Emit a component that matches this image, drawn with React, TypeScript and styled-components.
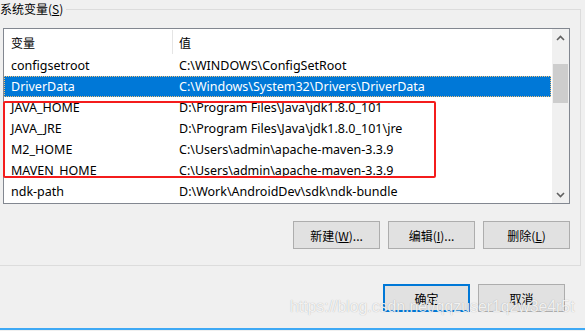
import styled, { createGlobalStyle } from "styled-components";

const GlobalStyle = createGlobalStyle`
  html, body {
    margin: 0;
    padding: 0;
    background: #f0f0f0;
  }
  body {
    font-family: "Noto Sans", "Noto Sans CJK SC", sans-serif;
    font-size: 12.5px;
    color: #000;
  }
`;

type EnvVar = { name: string; value: string };

const vars: EnvVar[] = [
  { name: "configsetroot", value: "C:\\WINDOWS\\ConfigSetRoot" },
  { name: "DriverData", value: "C:\\Windows\\System32\\Drivers\\DriverData" },
  { name: "JAVA_HOME", value: "D:\\Program Files\\Java\\jdk1.8.0_101" },
  { name: "JAVA_JRE", value: "D:\\Program Files\\Java\\jdk1.8.0_101\\jre" },
  { name: "M2_HOME", value: "C:\\Users\\admin\\apache-maven-3.3.9" },
  { name: "MAVEN_HOME", value: "C:\\Users\\admin\\apache-maven-3.3.9" },
  { name: "ndk-path", value: "D:\\Work\\AndroidDev\\sdk\\ndk-bundle" },
];

const Window = styled.div`
  position: relative;
  width: 585px;
  height: 331px;
  overflow: hidden;
  display: flex;
  flex-direction: column;
`;

const Group = styled.fieldset`
  box-sizing: border-box;
  width: 582px;
  min-width: 0;
  margin: 0 0 0 -1px;
  padding: 0;
  border: 1px solid #dcdcdc;
`;

const Legend = styled.legend`
  padding: 0 3px 0 0;
  line-height: 18px;
  font-family: "Noto Sans CJK SC", sans-serif;
  font-size: 12px;
`;

const Key = styled.span`
  text-decoration: underline;
  text-underline-offset: 1px;
`;

const GroupBody = styled.div`
  padding: 10px 10px 16px 3px;
`;

const ListBox = styled.div`
  position: relative;
  box-sizing: border-box;
  width: 567px;
  height: 176px;
  border: 1px solid #828790;
  background: #fff;
  display: flex;
`;

const ListArea = styled.div`
  flex: 1;
  display: flex;
  flex-direction: column;
  overflow: hidden;
`;

const HeaderRow = styled.div`
  display: grid;
  grid-template-columns: 168px 1fr;
  height: 26px;
  font-family: "Noto Sans CJK SC", sans-serif;
  font-size: 12px;
`;

const HeaderCell = styled.div<{ $divider?: boolean }>`
  display: flex;
  align-items: center;
  padding-left: ${(p) => (p.$divider ? "6px" : "7px")};
  margin: 1px 0 1px;
  border-left: ${(p) => (p.$divider ? "1px solid #e5e5e5" : "none")};
`;

const Row = styled.div<{ $selected?: boolean }>`
  box-sizing: border-box;
  display: grid;
  grid-template-columns: 168px 1fr;
  height: 21px;
  align-items: center;
  white-space: nowrap;
  background: ${(p) => (p.$selected ? "#0078d7" : "transparent")};
  color: ${(p) => (p.$selected ? "#fff" : "#000")};
  outline: ${(p) => (p.$selected ? "1px dotted #f3c27a" : "none")};
  outline-offset: -1px;
  margin-right: 1px;
`;

const Cell = styled.div`
  padding-left: 7px;
  overflow: hidden;
`;

const ScrollBar = styled.div`
  width: 17px;
  background: #f0f0f0;
  display: flex;
  flex-direction: column;
`;

const ArrowBtn = styled.div`
  height: 17px;
  display: flex;
  align-items: center;
  justify-content: center;
`;

const Track = styled.div`
  flex: 1;
  display: flex;
  flex-direction: column;
`;

const Thumb = styled.div`
  margin: 18px 1px 0;
  height: 39px;
  background: #cdcdcd;
`;

const Annotation = styled.div`
  position: absolute;
  left: -1px;
  top: 72px;
  width: 433px;
  height: 77px;
  box-sizing: border-box;
  border: 2px solid #f41c1c;
  border-radius: 2px;
  pointer-events: none;
`;

const ButtonRow = styled.div<{ $inset?: number }>`
  display: flex;
  justify-content: flex-end;
  gap: 8px;
  padding-right: ${(p) => p.$inset ?? 0}px;
`;

const GroupButtons = styled(ButtonRow)`
  margin-top: 17px;
  width: 567px;
`;

const DialogButtons = styled(ButtonRow)`
  margin-top: 18px;
`;

const Button = styled.button<{ $primary?: boolean }>`
  box-sizing: border-box;
  width: 87px;
  height: 28px;
  padding: 0;
  background: #e1e1e1;
  border: ${(p) => (p.$primary ? "2px solid #0078d7" : "1px solid #adadad")};
  font-family: "Noto Sans CJK SC", sans-serif;
  font-size: 12px;
  color: #000;
`;

const FooterLine = styled.div`
  margin-top: 16px;
  height: 2px;
  background: #3ea9f5;
`;

const Watermark = styled.div`
  position: absolute;
  left: 290px;
  top: 298px;
  font-family: "Liberation Sans", sans-serif;
  font-size: 15.8px;
  color: rgba(255, 255, 255, 0.85);
  text-shadow: 0 0 1px rgba(0, 0, 0, 0.3);
  white-space: nowrap;
  pointer-events: none;
`;

function Chevron({ up }: { up?: boolean }) {
  return (
    <svg width="9" height="6" viewBox="0 0 9 6">
      <path
        d={up ? "M1 5 L4.5 1.5 L8 5" : "M1 1 L4.5 4.5 L8 1"}
        fill="none"
        stroke="#606060"
        strokeWidth="1.6"
      />
    </svg>
  );
}

export default function App() {
  return (
    <Window>
      <GlobalStyle />
      <Group>
        <Legend>
          系统变量(<Key>S</Key>)
        </Legend>
        <GroupBody>
          <ListBox>
            <ListArea>
              <HeaderRow>
                <HeaderCell>变量</HeaderCell>
                <HeaderCell $divider>值</HeaderCell>
              </HeaderRow>
              {vars.map((v) => (
                <Row key={v.name} $selected={v.name === "DriverData"}>
                  <Cell>{v.name}</Cell>
                  <Cell>{v.value}</Cell>
                </Row>
              ))}
            </ListArea>
            <ScrollBar>
              <ArrowBtn>
                <Chevron up />
              </ArrowBtn>
              <Track>
                <Thumb />
              </Track>
              <ArrowBtn>
                <Chevron />
              </ArrowBtn>
            </ScrollBar>
            <Annotation />
          </ListBox>
          <GroupButtons>
            <Button>
              新建(<Key>W</Key>)...
            </Button>
            <Button>
              编辑(<Key>I</Key>)...
            </Button>
            <Button>
              删除(<Key>L</Key>)
            </Button>
          </GroupButtons>
        </GroupBody>
      </Group>
      <DialogButtons $inset={20}>
        <Button $primary>确定</Button>
        <Button>取消</Button>
      </DialogButtons>
      <FooterLine />
      <Watermark>https://blog.csdn.net/qqzuser1q2w3e4r5t</Watermark>
    </Window>
  );
}
